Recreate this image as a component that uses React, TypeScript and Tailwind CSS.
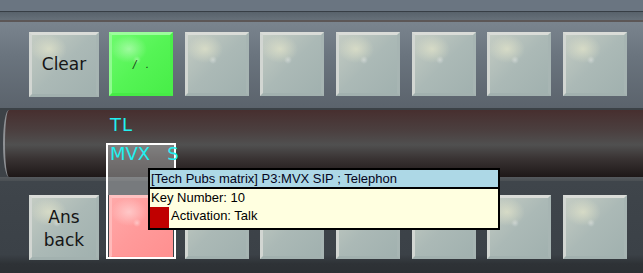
import React from "react";

type Variant = "gray" | "green" | "pink";

const faces: Record<Variant, string> = {
  gray:
    "bg-[radial-gradient(ellipse_18px_14px_at_17px_14px,rgba(235,235,205,0.6),rgba(235,235,205,0)),radial-gradient(circle_at_25px_25px,rgba(255,255,255,0.35),rgba(255,255,255,0)_4px),linear-gradient(135deg,#c4ccc3,#abb9b6_50%,#a1b1af)] border-t-[#dadcd8] border-l-[#d2d6d2] border-r-[#a7b5b3] border-b-[#a2b1af]",
  green:
    "bg-[radial-gradient(ellipse_18px_14px_at_17px_14px,rgba(220,255,220,0.5),rgba(220,255,220,0)),radial-gradient(circle_at_25px_25px,rgba(255,255,255,0.35),rgba(255,255,255,0)_4px),linear-gradient(135deg,#6cfb6c,#55f455_50%,#48ee48)] border-t-[#9cfc9c] border-l-[#8ffb8f] border-r-[#4af04a] border-b-[#46ec46]",
  pink:
    "bg-[radial-gradient(ellipse_18px_14px_at_17px_14px,rgba(255,225,225,0.6),rgba(255,225,225,0)),radial-gradient(circle_at_25px_25px,rgba(255,255,255,0.4),rgba(255,255,255,0)_4px),linear-gradient(135deg,#ffa9a9,#ff9a9a_50%,#ff9090)] border-t-[#ffc2c2] border-l-[#ffbaba] border-r-[#ff9393] border-b-[#ff8f8f]",
};

function Key({
  variant = "gray",
  wide = false,
  children,
  className = "",
}: {
  variant?: Variant;
  wide?: boolean;
  children?: React.ReactNode;
  className?: string;
}) {
  return (
    <div
      className={`${wide ? "w-[70px] h-[65px]" : "w-[64px] h-[64px]"} shrink-0 border-[3px] flex items-center justify-center text-center text-[17px] leading-[23px] text-[#151515] ${faces[variant]} ${className}`}
      style={{ fontFamily: '"DejaVu Sans", Verdana, sans-serif' }}
    >
      {children}
    </div>
  );
}

export default function App() {
  return (
    <div
      className="relative w-[643px] h-[273px] overflow-hidden bg-[#3c4248]"
      style={{ fontFamily: '"Liberation Sans", Arial, sans-serif' }}
    >
      {/* header bands */}
      <div className="h-[11px] bg-[#6a7581]" />
      <div className="h-[1px] bg-[#373e45]" />
      <div className="h-[8px] bg-[linear-gradient(to_bottom,#58626b,#667079)]" />
      <div className="h-[2px] bg-[#5c5656]" />

      {/* top key panel */}
      <div className="h-[86px] bg-[linear-gradient(to_bottom,#7a848e,#6a747e_40%,#5b636c)] flex items-start pt-[10px] pl-[29px]">
        <Key wide>Clear</Key>
        <div className="flex gap-[11.67px] ml-[10px]">
          <Key variant="green">
            <span
              className="text-[10px] leading-none text-[#143014] whitespace-pre mt-[2px] italic"
              style={{ fontFamily: '"DejaVu Sans", sans-serif' }}
            >
              {"/   ."}
            </span>
          </Key>
          <Key />
          <Key />
          <Key />
          <Key />
          <Key />
          <Key />
        </div>
      </div>

      <div className="h-[2px] bg-[#3b4146]" />

      {/* label strip */}
      <div className="h-[67px] flex bg-[#3d4247]">
        <div className="ml-[3px] flex-1 border-l-[2px] border-[#8e9094] rounded-l-[6px_34px] bg-[linear-gradient(to_bottom,#472f2f,#4b3f3f_30%,#505050_52%,#3a3434_72%,#1e1818)]" />
      </div>

      <div className="h-[4px] bg-[linear-gradient(to_bottom,#55595d,#4a4f53)]" />

      {/* bottom key panel */}
      <div className="h-[92px] bg-[linear-gradient(to_bottom,#3f454b,#3b4147_80%,#2e3236_90%,#2c3034)] flex items-start pt-[14px] pl-[29px]">
        <Key wide>
          <span className="mt-[3px]">
            Ans
            <br />
            back
          </span>
        </Key>
        <div className="flex gap-[11.67px] ml-[10px]">
          <Key variant="pink" className="relative z-10" />
          <Key />
          <Key />
          <Key />
          <Key />
          <Key />
          <Key />
        </div>
      </div>

      {/* selection frame */}
      <div className="absolute left-[106px] top-[143px] w-[70px] h-[116px] border-2 border-white z-20 pointer-events-none">
        <div className="h-[50px] bg-[rgba(176,176,176,0.5)]" />
      </div>

      {/* labels */}
      <div
        className="absolute left-[110px] top-[113px] text-[18px] leading-[24px] text-[#22f0f0] z-30 whitespace-pre tracking-[1px]"
        style={{ fontFamily: '"DejaVu Sans", Verdana, sans-serif' }}
      >
        TL
      </div>
      <div
        className="absolute left-[110px] top-[142px] text-[18px] leading-[24px] text-[#22f0f0] z-30 whitespace-pre"
        style={{ fontFamily: '"DejaVu Sans", Verdana, sans-serif' }}
      >
        {"MVX   S"}
      </div>

      {/* tooltip */}
      <div className="absolute left-[148px] top-[168px] w-[352px] h-[62px] border-2 border-black bg-[#ffffe0] z-40 flex flex-col text-[13px] text-[#050520]">
        <div className="h-[19px] bg-[#add8e6] border-b-2 border-black pl-[1px] leading-[18px] whitespace-nowrap overflow-hidden">
          [Tech Pubs matrix] P3:MVX SIP ; Telephon
        </div>
        <div className="h-[18px] pl-[1px] leading-[18px] text-black">Key Number: 10</div>
        <div className="flex-1 flex items-stretch text-black">
          <div className="w-[19px] bg-[#c00000]" />
          <div className="pl-[2px] leading-[18px]">Activation: Talk</div>
        </div>
      </div>
    </div>
  );
}
